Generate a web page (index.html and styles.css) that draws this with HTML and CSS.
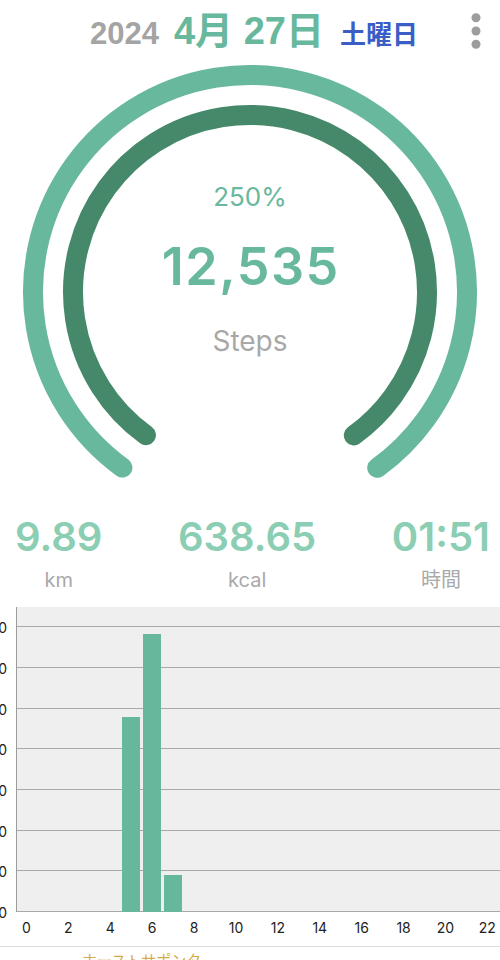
FILE: index.html
```html
<!DOCTYPE html>
<html lang="ja">
<head>
<meta charset="utf-8">
<title>歩数</title>
<link rel="stylesheet" href="styles.css">
</head>
<body>
<div class="app">
  <header class="top">
    <div class="date">
      <span class="year">2024</span>
      <span class="md">4月 27日</span>
      <span class="wd">土曜日</span>
    </div>
    <svg class="menu" viewBox="0 0 10 36" width="10" height="36" aria-label="menu">
      <circle cx="5" cy="4.7" r="4.5"/>
      <circle cx="5" cy="18" r="4.5"/>
      <circle cx="5" cy="31.3" r="4.5"/>
    </svg>
  </header>

  <section class="gauge">
    <svg class="rings" viewBox="0 0 500 440" width="500" height="440">
      <circle class="ring-outer" cx="250" cy="232" r="217" stroke-dasharray="1090.8 1400" transform="rotate(126 250 232)"/>
      <circle class="ring-inner" cx="250" cy="232" r="177" stroke-dasharray="889.7 1200" transform="rotate(126 250 232)"/>
    </svg>
    <div class="readout">
      <div class="pct">250%</div>
      <div class="count">12,535</div>
      <div class="unit">Steps</div>
    </div>
  </section>

  <section class="stats">
    <div class="stat"><div class="val">9.89</div><div class="lbl">km</div></div>
    <div class="stat"><div class="val">638.65</div><div class="lbl">kcal</div></div>
    <div class="stat"><div class="val">01:51</div><div class="lbl">時間</div></div>
  </section>

  <section class="chart">
    <div class="yaxis">
      <div class="ytick"><span>7000</span></div>
      <div class="ytick"><span>6000</span></div>
      <div class="ytick"><span>5000</span></div>
      <div class="ytick"><span>4000</span></div>
      <div class="ytick"><span>3000</span></div>
      <div class="ytick"><span>2000</span></div>
      <div class="ytick"><span>1000</span></div>
      <div class="ytick"><span>0</span></div>
    </div>
    <div class="plot">
      <div class="bar" style="grid-column:6;height:64%"></div>
      <div class="bar" style="grid-column:7;height:91.07%"></div>
      <div class="bar" style="grid-column:8;height:12.07%"></div>
    </div>
    <div class="xaxis">
      <span>0</span><span>2</span><span>4</span><span>6</span><span>8</span><span>10</span>
      <span>12</span><span>14</span><span>16</span><span>18</span><span>20</span><span>22</span>
    </div>
  </section>

  <div class="sep"></div>
  <div class="footer-link">ホーストサポンタ</div>
</div>
</body>
</html>
```

FILE: styles.css
```css
html, body {
  margin: 0;
  padding: 0;
  overflow: hidden;
  background: #ffffff;
}

body {
  font-family: Inter, "Noto Sans CJK JP", sans-serif;
  width: 500px;
  height: 960px;
}

.app {
  width: 500px;
}

/* header */
.top {
  height: 60px;
  display: flex;
  justify-content: space-between;
  align-items: flex-start;
  padding: 0 19px 0 90px;
  box-sizing: border-box;
}

.date {
  display: flex;
  align-items: baseline;
  margin-top: 12px;
  line-height: 1;
  font-weight: 700;
  font-family: "Liberation Sans", "Noto Sans CJK JP", sans-serif;
}

.year {
  font-size: 31px;
  color: #a4a4a4;
}

.md {
  font-size: 38px;
  color: #67b89d;
  margin-left: 15px;
}

.wd {
  font-size: 26px;
  color: #3a5ec6;
  margin-left: 16px;
}

.menu {
  display: block;
  margin-top: 13px;
  fill: #9d9d9d;
}

/* gauge */
.gauge {
  display: grid;
  height: 440px;
}

.rings,
.readout {
  grid-area: 1 / 1;
}

.rings {
  display: block;
}

.ring-outer,
.ring-inner {
  fill: none;
  stroke-width: 20;
  stroke-linecap: round;
}

.ring-outer {
  stroke: #67b89d;
}

.ring-inner {
  stroke: #46896a;
}

.readout {
  display: flex;
  flex-direction: column;
  align-items: center;
  padding-top: 124px;
  line-height: 1;
}

.pct {
  font-size: 26px;
  color: #67b89d;
}

.count {
  margin-top: 31px;
  font-size: 52px;
  font-weight: 600;
  letter-spacing: 1.5px;
  padding-left: 1.5px;
  color: #67b89d;
}

.unit {
  margin-top: 34px;
  font-size: 28px;
  color: #a8a8a8;
}

/* stats */
.stats {
  display: flex;
  justify-content: space-between;
  padding: 16.5px 10px 0 15px;
}

.stat {
  display: flex;
  flex-direction: column;
  align-items: center;
  line-height: 1;
}

.val {
  font-size: 40px;
  font-weight: 600;
  color: #8bceb4;
}

.lbl {
  margin-top: 13.5px;
  font-size: 20px;
  color: #a9a9a9;
}

/* chart */
.chart {
  margin-top: 17px;
  display: grid;
  grid-template-columns: 16px 502.8px;
  grid-template-rows: 305px 30px;
}

.yaxis {
  grid-column: 1;
  grid-row: 1;
  display: flex;
  flex-direction: column;
  padding-top: 0.67px;
}

.ytick {
  height: 40.667px;
  flex: none;
  display: flex;
  justify-content: flex-end;
  align-items: center;
  padding-right: 9px;
  font-size: 14px;
  color: #222222;
}

.ytick span {
  flex: none;
}

.plot {
  grid-column: 2;
  grid-row: 1;
  display: grid;
  grid-template-columns: repeat(24, 1fr);
  grid-template-rows: 1fr;
  align-items: end;
  background:
    linear-gradient(to right, #9c9c9c 0 1px, transparent 1px),
    repeating-linear-gradient(to top, #a9a9a9 0 1px, transparent 1px 40.667px),
    #efefef;
}

.bar {
  grid-row: 1;
  justify-self: center;
  width: 17.5px;
  background: #67b79c;
}

.xaxis {
  grid-column: 2;
  grid-row: 2;
  display: grid;
  grid-template-columns: repeat(12, 1fr);
  align-items: center;
  font-size: 14px;
  color: #222222;
}

.xaxis span {
  width: 50%;
  text-align: center;
}

.sep {
  margin-top: 4px;
  height: 1px;
  background: #dcdcdc;
}

.footer-link {
  margin-top: 6px;
  padding-left: 82px;
  font-size: 15px;
  line-height: 1;
  color: #d6ab4b;
}
```
